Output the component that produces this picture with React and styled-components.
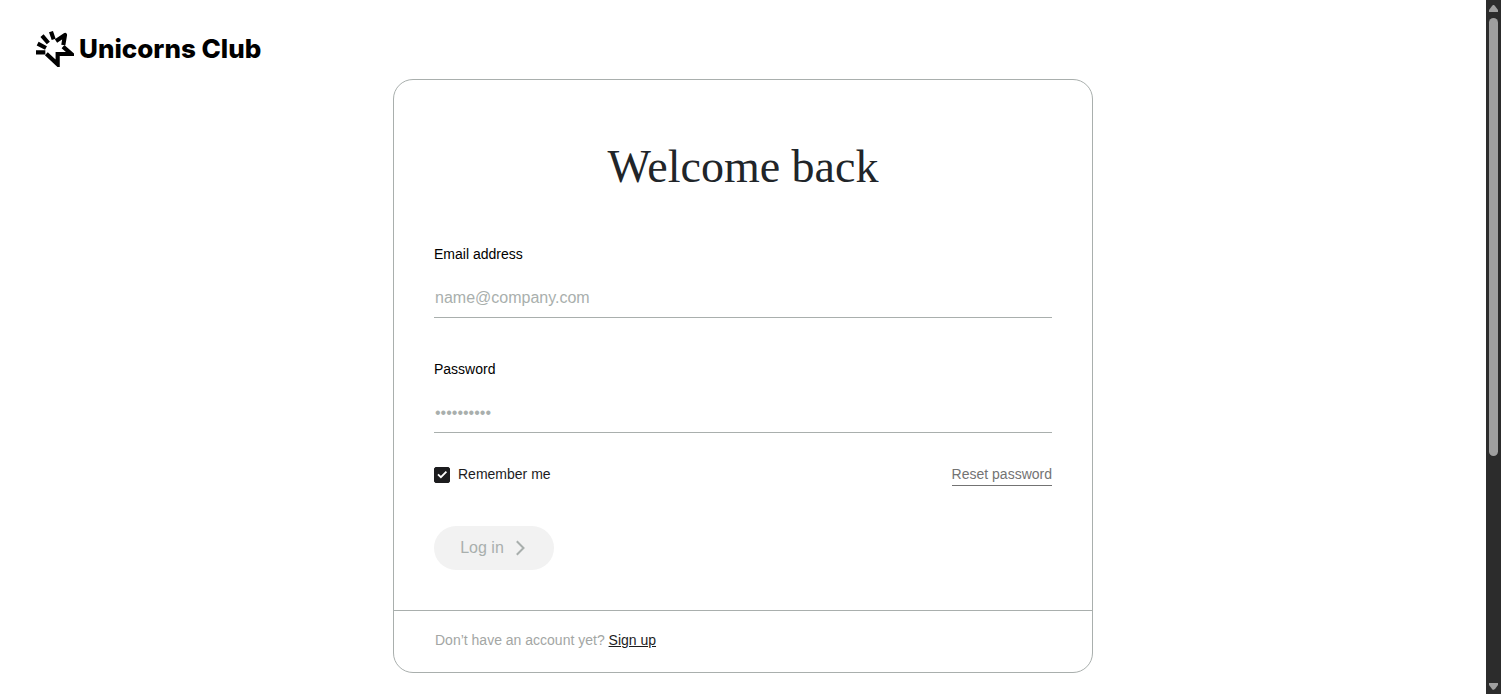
import React from "react";
import styled, { createGlobalStyle } from "styled-components";

const GlobalStyle = createGlobalStyle`
  *, *::before, *::after { box-sizing: border-box; }
  body {
    margin: 0;
    background: #fff;
    color: #1c1c1e;
    font-family: "Liberation Sans", Arial, sans-serif;
    font-size: 14px;
    line-height: 20px;
  }
`;

const Shell = styled.div`
  display: flex;
  height: 100vh;
  overflow: hidden;
`;

const Page = styled.div`
  flex: 1;
  min-width: 0;
  overflow: hidden;
`;

const Header = styled.header`
  display: flex;
  padding: 31px 36px 12px;
`;

const Brand = styled.a`
  display: flex;
  align-items: center;
  gap: 5px;
  height: 36px;
  color: #000;
  font-family: Inter, "Liberation Sans", sans-serif;
  font-size: 26px;
  font-weight: 800;
  line-height: 36px;
  text-decoration: none;
  white-space: nowrap;
`;

const Card = styled.main`
  width: 100%;
  max-width: 700px;
  margin: 0 auto;
  border: 1px solid #a9afad;
  border-radius: 20px;
`;

const Form = styled.form`
  padding: 59px 40px 40px;
`;

const Title = styled.h1`
  margin: 0 0 49px;
  color: #212529;
  font-family: "Liberation Serif", "Times New Roman", serif;
  font-size: 46px;
  font-weight: 400;
  line-height: 56px;
  text-align: center;
`;

const Field = styled.div`
  display: flex;
  flex-direction: column;
  gap: 14px;
  margin-bottom: ${(p) => (p.$last ? 31 : 41)}px;
`;

const Label = styled.label`
  color: #000;
`;

const Input = styled.input`
  width: 100%;
  height: 40px;
  padding: 0 1px;
  border: 0;
  border-bottom: 1px solid #a9afad;
  border-radius: 0;
  outline: 0;
  background: transparent;
  color: #1c1c1e;
  font: 16px/24px "Liberation Sans", Arial, sans-serif;
  &::placeholder { color: #a9afad; opacity: 1; }
`;

const Options = styled.div`
  display: flex;
  align-items: flex-start;
  justify-content: space-between;
  margin-bottom: 40px;
`;

const Remember = styled.label`
  display: flex;
  align-items: center;
  gap: 8px;
`;

const TickWrap = styled.span`
  display: grid;
  width: 16px;
  height: 16px;
  margin-top: 2px;
  > * { grid-area: 1 / 1; }
  svg { visibility: hidden; pointer-events: none; }
  input:checked + svg { visibility: visible; }
`;

const Tick = styled.input`
  appearance: none;
  width: 16px;
  height: 16px;
  margin: 0;
  border: 1px solid #1c1c1e;
  border-radius: 2px;
  &:checked { background: #1c1c1e; }
`;

const ResetLink = styled.a`
  padding-bottom: 1px;
  border-bottom: 1px solid #737373;
  color: #737373;
  text-decoration: none;
`;

const LoginButton = styled.button`
  display: flex;
  align-items: center;
  justify-content: center;
  gap: 12px;
  width: 120px;
  height: 44px;
  padding: 0 3px 0 0;
  border: 0;
  border-radius: 22px;
  background: #f2f2f2;
  color: #a9afad;
  font: 16px/24px "Liberation Sans", Arial, sans-serif;
`;

const CardFooter = styled.footer`
  padding: 19px 41px 22px;
  border-top: 1px solid #a9afad;
  color: #a3a6a4;
`;

const SignUpLink = styled.a`
  color: #1c1c1e;
  text-decoration: underline;
`;

const ScrollRail = styled.div`
  display: flex;
  flex-direction: column;
  align-items: center;
  width: 15px;
  padding: 5px 0 4px;
  background: #2c2c2c;
`;

const ScrollThumb = styled.div`
  width: 9px;
  height: 64%;
  margin: 6px 0 auto;
  border-radius: 5px;
  background: #9f9f9f;
`;

function StarMark() {
  return (
    <svg width="38" height="36" viewBox="30 27 114 108" fill="none" stroke="currentColor" strokeWidth="12.5" aria-hidden="true">
      <path d="M30 91H58M35 65L60 78M48 41L67 63M75 29L83 52" />
      <path d="M90 57L117 39L112 69" strokeLinejoin="round" />
      <path d="M111 74L136 96H95V127L61 95" strokeLinejoin="miter" />
    </svg>
  );
}

function Arrow({ down }) {
  return (
    <svg width="9" height="7" viewBox="0 0 9 7" aria-hidden="true">
      <path d={down ? "M0 0H9V2L6 6L4 7L3 6L0 2Z" : "M0 7H9V5L6 1L5 0H4L3 1L0 5Z"} fill="#9f9f9f" />
    </svg>
  );
}

export default function App() {
  return (
    <>
      <GlobalStyle />
      <Shell>
        <Page>
          <Header>
            <Brand href="#">
              <StarMark />
              Unicorns Club
            </Brand>
          </Header>
          <Card>
            <Form onSubmit={(e) => e.preventDefault()}>
              <Title>Welcome back</Title>
              <Field>
                <Label htmlFor="email">Email address</Label>
                <Input id="email" type="email" placeholder="name@company.com" />
              </Field>
              <Field $last>
                <Label htmlFor="password">Password</Label>
                <Input id="password" type="password" placeholder="••••••••••" />
              </Field>
              <Options>
                <Remember htmlFor="remember">
                  <TickWrap>
                    <Tick id="remember" type="checkbox" defaultChecked />
                    <svg width="16" height="16" viewBox="0 0 16 16" fill="none" stroke="#fff" strokeWidth="1.8" aria-hidden="true">
                      <path d="M4 7.3L6.9 10.2L12.4 4.7" />
                    </svg>
                  </TickWrap>
                  Remember me
                </Remember>
                <ResetLink href="#">Reset password</ResetLink>
              </Options>
              <LoginButton type="submit" disabled>
                Log in
                <svg width="9" height="16" viewBox="0 0 9 16" fill="none" stroke="currentColor" strokeWidth="2" aria-hidden="true">
                  <path d="M0.8 1.2L7.5 8L0.8 14.8" />
                </svg>
              </LoginButton>
            </Form>
            <CardFooter>
              Don’t have an account yet? <SignUpLink href="#">Sign up</SignUpLink>
            </CardFooter>
          </Card>
        </Page>
        <ScrollRail aria-hidden="true">
          <Arrow />
          <ScrollThumb />
          <Arrow down />
        </ScrollRail>
      </Shell>
    </>
  );
}
